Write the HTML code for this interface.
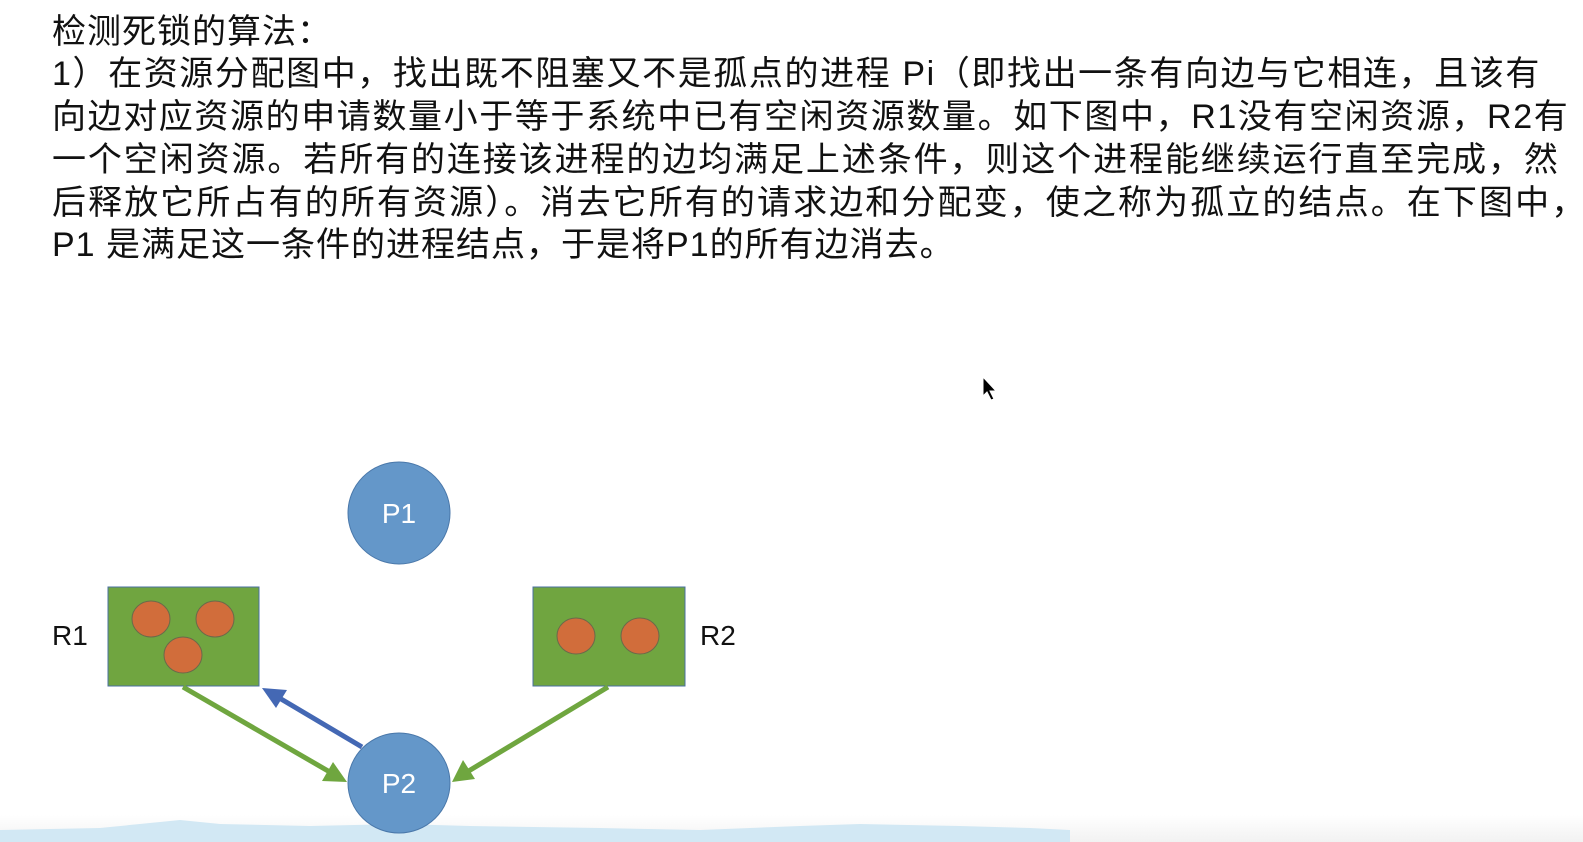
<!DOCTYPE html>
<html><head><meta charset="utf-8"><style>
html,body{margin:0;padding:0;width:1583px;height:842px;overflow:hidden;background:#fff;}
.t{position:absolute;left:52px;font-family:"Liberation Sans","Noto Sans CJK SC",sans-serif;font-size:34px;line-height:40px;color:#111;white-space:nowrap;}
</style></head><body>
<div class="t" style="top:12px;letter-spacing:1px">检测死锁的算法：</div>
<div class="t" style="top:54px;letter-spacing:1.6px">1）在资源分配图中，找出既不阻塞又不是孤点的进程 Pi（即找出一条有向边与它相连，且该有</div>
<div class="t" style="top:97px;letter-spacing:1.6px">向边对应资源的申请数量小于等于系统中已有空闲资源数量。如下图中，R1没有空闲资源，R2有</div>
<div class="t" style="top:140px;letter-spacing:1.9px">一个空闲资源。若所有的连接该进程的边均满足上述条件，则这个进程能继续运行直至完成，然</div>
<div class="t" style="top:183px;letter-spacing:2.1px">后释放它所占有的所有资源）。消去它所有的请求边和分配变，使之称为孤立的结点。在下图中，</div>
<div class="t" style="top:225px;letter-spacing:1px">P1 是满足这一条件的进程结点，于是将P1的所有边消去。</div>
<svg width="1583" height="842" style="position:absolute;left:0;top:0">
<defs>
<linearGradient id="g" x1="0" y1="0" x2="0" y2="1"><stop offset="0" stop-color="#fff"/><stop offset="1" stop-color="#f2f2f2"/></linearGradient>
</defs>
<rect x="0" y="815" width="1583" height="27" fill="url(#g)"/>
<path d="M0 830 L100 828 L160 822 L180 820 L220 824 L310 826 L400 824 L470 826 L600 828 L700 830 L750 828 L800 826 L860 824 L960 826 L1030 828 L1070 830 L1070 842 L0 842 Z" fill="#d2e8f4"/>
<g font-family="Liberation Sans, sans-serif" font-size="28" fill="#111">
<text x="52" y="645">R1</text><text x="700" y="645">R2</text></g>
<rect x="108" y="587" width="151" height="99" fill="#70a540" stroke="#4a70a0" stroke-width="1"/>
<rect x="533" y="587" width="152" height="99" fill="#70a540" stroke="#4a70a0" stroke-width="1"/>
<g fill="#d16d3b" stroke="#6a6a4a" stroke-width="1">
<ellipse cx="151" cy="619" rx="19" ry="18"/><ellipse cx="215" cy="619" rx="19" ry="18"/><ellipse cx="183" cy="655" rx="19" ry="18"/>
<ellipse cx="576" cy="636" rx="19" ry="18"/><ellipse cx="640" cy="636" rx="19" ry="18"/></g>
<g stroke="#6fa63f" stroke-width="5" fill="#6fa63f">
<line x1="183" y1="687" x2="335" y2="775"/><line x1="608" y1="687" x2="462" y2="775"/></g>
<polygon points="347,782 322,781 333,762" fill="#6fa63f"/>
<polygon points="452,782 463,760 475,779" fill="#6fa63f"/>
<line x1="362" y1="747" x2="276" y2="696" stroke="#4468b4" stroke-width="5"/>
<polygon points="262,688 287,690 276,708" fill="#4468b4"/>
<ellipse cx="399" cy="513" rx="51" ry="51" fill="#6497c9" stroke="#4a78aa"/>
<ellipse cx="399" cy="783" rx="51" ry="50" fill="#6497c9" stroke="#4a78aa"/>
<g font-family="Liberation Sans, sans-serif" font-size="28" fill="#fff" text-anchor="middle">
<text x="399" y="523">P1</text><text x="399" y="793">P2</text></g>
<path d="M983 377 L983 396 L987 392 L991 400 L994 399 L990 391 L996 391 Z" fill="#000" stroke="#fff" stroke-width="1"/>
</svg>
</body></html>
